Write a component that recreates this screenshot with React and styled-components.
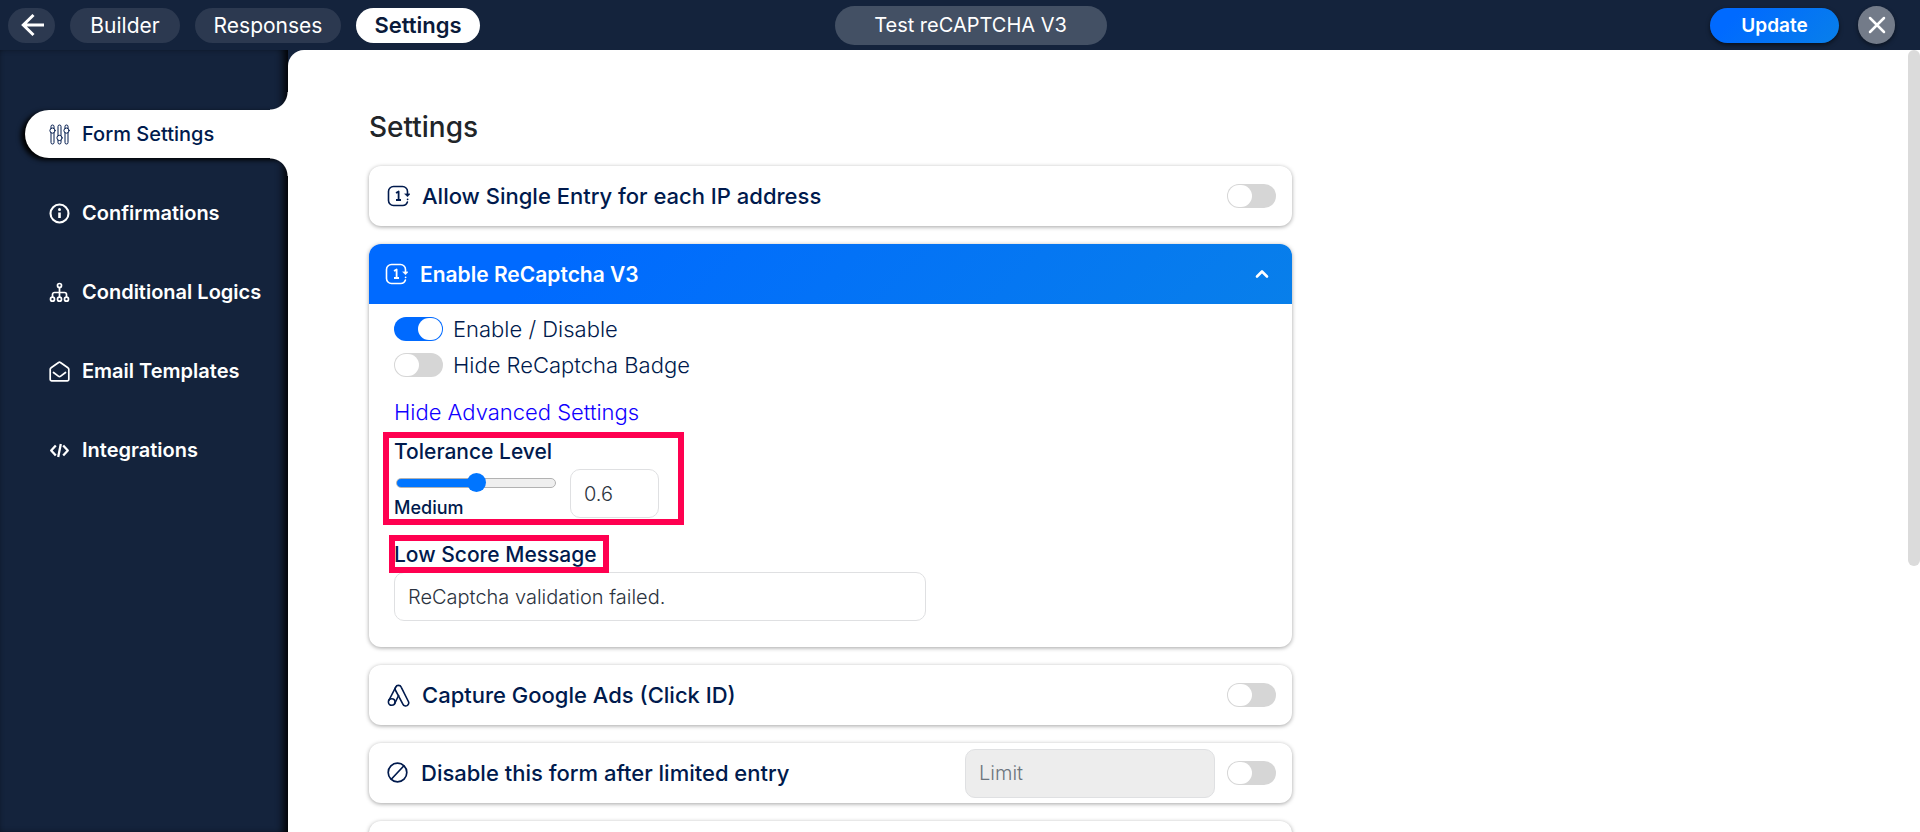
import React from "react";
import styled, { createGlobalStyle, css } from "styled-components";

const navy = "#14233c";
const ink = "#001a4d";
const pink = "#ff0050";
const blueGradient = "linear-gradient(135deg, #006aff 0%, #006aff 20%, #087fea 100%)";

const GlobalStyle = createGlobalStyle`
  *, *::before, *::after { box-sizing: border-box; }
  html, body { margin: 0; background: ${navy}; }
  body, button, input { font-family: Inter, "Open Sans", sans-serif; }
  h1, h2, p { margin: 0; }
`;

const Page = styled.div`
  display: flex;
  flex-direction: column;
  height: 100vh;
  background: ${navy};
`;

const TopBar = styled.header`
  display: grid;
  grid-template-columns: 1fr auto 1fr;
  align-items: center;
  height: 50px;
  padding: 0 25px 0 8px;
  flex: none;
`;

const Nav = styled.nav`
  display: flex;
  gap: 15px;
`;

const NavPill = styled.button`
  display: flex;
  align-items: center;
  justify-content: center;
  height: 35px;
  width: ${(p) => p.$width}px;
  padding: 0;
  border: 0;
  border-radius: 18px;
  background: ${(p) => (p.$active ? "#fff" : "#2c3950")};
  color: ${(p) => (p.$active ? "#0a1a3a" : "#fff")};
  font-size: ${(p) => (p.$active ? 22 : 21)}px;
  font-weight: ${(p) => (p.$active ? 600 : 400)};
`;

const FormName = styled.input`
  width: 272px;
  height: 39px;
  margin-left: 38px;
  padding: 0;
  border: 0;
  border-radius: 20px;
  background: #435064;
  color: #fff;
  font-size: 20px;
  text-align: center;
`;

const Actions = styled.div`
  display: flex;
  align-items: center;
  justify-content: flex-end;
  gap: 19px;
`;

const UpdateButton = styled.button`
  width: 129px;
  height: 35px;
  border: 0;
  border-radius: 18px;
  background: ${blueGradient};
  box-shadow: 0 2px 4px rgba(0, 0, 0, 0.55);
  color: #fff;
  font-size: 19px;
  font-weight: 600;
`;

const CloseButton = styled.button`
  display: flex;
  align-items: center;
  justify-content: center;
  width: 37px;
  height: 38px;
  padding: 0;
  border: 0;
  border-radius: 19px;
  background: #737b89;
  box-shadow: 0 2px 4px rgba(0, 0, 0, 0.45);
  color: #fff;
`;

const Body = styled.div`
  display: flex;
  flex: 1;
  min-height: 0;
`;

const Sidebar = styled.nav`
  display: flex;
  flex-direction: column;
  gap: 31px;
  width: 288px;
  flex: none;
  padding: 60px 0 0 25px;
  box-shadow: inset -8px 0 8px -4px #000, inset 4px 0 4px -3px rgba(0, 0, 0, 0.2);
`;

const activeItem = css`
  position: relative;
  background: #fff;
  color: ${ink};
  font-weight: 500;
  box-shadow: -4px 2px 5px #000;

  &::before,
  &::after {
    content: "";
    position: absolute;
    right: 0;
    width: 18px;
    height: 18px;
  }
  &::before {
    bottom: 100%;
    background: radial-gradient(circle at 0 0, transparent 17px, #fff 18px);
  }
  &::after {
    top: 100%;
    background: radial-gradient(circle at 0 100%, transparent 17px, #fff 18px);
  }
`;

const SideItem = styled.a`
  display: flex;
  align-items: center;
  gap: 12px;
  height: 48px;
  padding-left: 24px;
  border-radius: 24px 0 0 24px;
  color: #fff;
  font-size: 20px;
  font-weight: 600;
  text-decoration: none;
  white-space: nowrap;
  ${(p) => p.$active && activeItem}
`;

const Main = styled.main`
  position: relative;
  flex: 1;
  min-width: 0;
  overflow: hidden;
  padding: 61px 80px 0 81px;
  border-top-left-radius: 16px;
  background: #fff;
`;

const ScrollThumb = styled.div`
  position: absolute;
  top: 0;
  right: 0;
  width: 12px;
  height: 66%;
  border-radius: 6px;
  background: #dbdbdb;
`;

const Title = styled.h1`
  margin-bottom: 22px;
  color: #212529;
  font-size: 28px;
  font-weight: 500;
  line-height: 33px;
`;

const Cards = styled.div`
  display: flex;
  flex-direction: column;
  gap: 18px;
  max-width: 923px;
`;

const Card = styled.section`
  border-radius: 12px;
  background: #fff;
  box-shadow: 0 1px 4px rgba(0, 0, 0, 0.36);
  overflow: hidden;
`;

const CardHead = styled.div`
  display: flex;
  align-items: center;
  gap: 12px;
  height: 60px;
  padding: 0 16px 0 18px;
  color: ${ink};
`;

const OpenHead = styled.button`
  display: flex;
  align-items: center;
  gap: 12px;
  width: 100%;
  height: 60px;
  padding: 0 22px 0 16px;
  border: 0;
  background: ${blueGradient};
  color: #fff;
  font-size: 21px;
  font-weight: 600;
  text-align: left;
`;

const HeadLabel = styled.label`
  flex: 1;
  font-size: 22px;
  font-weight: 500;
`;

const HeadText = styled.span`
  flex: 1;
`;

const Toggle = styled.input.attrs({ type: "checkbox", role: "switch" })`
  appearance: none;
  flex: none;
  width: 49px;
  height: 24px;
  margin: 0;
  padding: 1px;
  border-radius: 12px;
  background: #d6d6d6;

  &::before {
    content: "";
    display: block;
    width: 24px;
    height: 22px;
    border-radius: 12px;
    background: #fff;
  }
  &:checked {
    background: #006aff;
  }
  &:checked::before {
    margin-left: 23px;
  }
`;

const CardBody = styled.div`
  display: flex;
  flex-direction: column;
  align-items: flex-start;
  padding: 13px 25px 26px;
`;

const ToggleRow = styled.label`
  display: flex;
  align-items: center;
  gap: 10px;
  height: 24px;
  margin-bottom: 12px;
  color: ${ink};
  font-size: 22px;
  font-weight: 300;
`;

const AdvancedLink = styled.a`
  margin: 11px 0 13px;
  color: #1100ff;
  font-size: 22px;
  font-weight: 300;
  line-height: 24px;
  text-decoration: none;
`;

const Marked = styled.div`
  position: relative;
  &::after {
    content: "";
    position: absolute;
    inset: ${(p) => p.$inset};
    border: 6px solid ${pink};
    pointer-events: none;
  }
`;

const FieldLabel = styled.label`
  display: block;
  margin-bottom: 2px;
  color: ${ink};
  font-size: 21px;
  font-weight: 500;
  line-height: 30px;
`;

const Tolerance = styled.div`
  display: flex;
  gap: 14px;
  margin-bottom: 22px;
`;

const SliderColumn = styled.div`
  display: flex;
  flex-direction: column;
  gap: 6px;
  padding-top: 4px;
`;

const Slider = styled.input.attrs({ type: "range" })`
  appearance: none;
  width: 160px;
  height: 19px;
  margin: 0 0 0 2px;
  background: transparent;

  &::-webkit-slider-runnable-track {
    height: 10px;
    border: 1px solid #b2b2b2;
    border-radius: 5px;
    background: linear-gradient(90deg, #0075ff 50%, #efefef 50%);
    background-origin: border-box;
  }
  &::-webkit-slider-thumb {
    appearance: none;
    width: 19px;
    height: 19px;
    margin-top: -6px;
    border-radius: 50%;
    background: #0075ff;
  }
`;

const LevelName = styled.output`
  color: ${ink};
  font-size: 18px;
  font-weight: 500;
  line-height: 20px;
`;

const TextBox = styled.input`
  width: ${(p) => p.$width}px;
  height: 49px;
  padding: 0 13px;
  border: 1px solid #dfe0e2;
  border-radius: 10px;
  background: #fff;
  color: #2b3340;
  font-size: 20px;
  font-weight: 300;

  &:disabled {
    background: #ededed;
  }
  &::placeholder {
    color: #6c757d;
    opacity: 1;
  }
`;

const svgProps = { fill: "none", stroke: "currentColor", strokeLinecap: "round", strokeLinejoin: "round", "aria-hidden": true };

const ArrowIcon = () => (
  <svg width="26" height="24" viewBox="0 0 26 24" {...svgProps} strokeWidth="3" strokeLinecap="butt" strokeLinejoin="miter">
    <path d="M25 12H4M14.500 2L4.300 12l10.200 10" />
  </svg>
);

const CloseIcon = () => (
  <svg width="18" height="18" viewBox="0 0 18 18" {...svgProps} strokeWidth="2.5">
    <path d="M2 2l14 14M16 2L2 16" />
  </svg>
);

const SlidersIcon = () => (
  <svg width="21" height="21" viewBox="0 0 21 21" {...svgProps} strokeWidth="1">
    <path d="M2 4.200V2.500a1.500 1.500 0 0 1 3 0v1.700M2 9v9.500a1.500 1.500 0 0 0 3 0V9" />
    <circle cx="3.500" cy="6.600" r="2.600" />
    <path d="M9 11.400V2.500a1.500 1.500 0 0 1 3 0v8.900M9 16.400v2.100a1.500 1.500 0 0 0 3 0v-2.100" />
    <circle cx="10.500" cy="13.900" r="2.600" />
    <path d="M16 4.200V2.500a1.500 1.500 0 0 1 3 0v1.700M16 9v9.500a1.500 1.500 0 0 0 3 0V9" />
    <circle cx="17.500" cy="6.600" r="2.600" />
  </svg>
);

const InfoIcon = () => (
  <svg width="21" height="21" viewBox="0 0 21 21" {...svgProps} strokeWidth="2.1">
    <circle cx="10.500" cy="10.500" r="9" />
    <path d="M10.500 9.500v5.500" strokeWidth="2.600" strokeLinecap="butt" />
    <circle cx="10.500" cy="6.600" r="1.500" fill="currentColor" stroke="none" />
  </svg>
);

const TreeIcon = () => (
  <svg width="21" height="21" viewBox="0 0 21 21" {...svgProps} strokeWidth="1.700">
    <circle cx="10.500" cy="3.500" r="2" />
    <circle cx="3.500" cy="17.200" r="2" />
    <circle cx="10.500" cy="17.200" r="2" />
    <circle cx="17.500" cy="17.200" r="2" />
    <path d="M10.500 5.500v9.500M3.500 15v-2.500a2 2 0 0 1 2-2h10a2 2 0 0 1 2 2V15" />
  </svg>
);

const MailIcon = () => (
  <svg width="21" height="21" viewBox="0 0 21 21" {...svgProps} strokeWidth="1.700">
    <path d="M1.200 8.300v10.200a1.300 1.300 0 0 0 1.300 1.300h16a1.300 1.300 0 0 0 1.300-1.300V8.300a2 2 0 0 0-.9-1.600L11.400 1.500a1.600 1.600 0 0 0-1.800 0L2.100 6.700a2 2 0 0 0-.9 1.600z" />
    <path d="M4.500 11.500l4.800 3.600a2 2 0 0 0 2.400 0l4.800-3.600" />
  </svg>
);

const CodeIcon = () => (
  <svg width="21" height="21" viewBox="0 0 21 21" {...svgProps} strokeWidth="2.300" strokeLinecap="butt">
    <path d="M6.800 5.500L2.200 10.500l4.600 5M14.200 5.500l4.600 5-4.600 5M11.800 4L9.200 17" />
  </svg>
);

const OnceIcon = () => (
  <svg width="23" height="23" viewBox="0 0 23 23" {...svgProps} strokeWidth="1.600">
    <path d="M20.500 9.500V6.500a5 5 0 0 0-5-5h-9a5 5 0 0 0-5 5v9a5 5 0 0 0 5 5h9a5 5 0 0 0 4.900-3.500" />
    <path d="M17.800 9l2.700 2.800L23 9z" fill="currentColor" strokeWidth="0.500" />
    <path d="M9 8l2.600-1.500v8.500M9 15h5" strokeWidth="1.800" strokeLinecap="butt" />
    <circle cx="20.600" cy="14.300" r="0.900" fill="currentColor" stroke="none" />
  </svg>
);

const AdsIcon = () => (
  <svg width="23" height="23" viewBox="0 0 23 23" {...svgProps} strokeWidth="1.600">
    <path d="M8.600 3.300a3.100 3.100 0 0 1 5.700 0l7.100 14.200a3 3 0 0 1-5.400 2.800L8.600 6.500a3.400 3.400 0 0 1 0-3.200z" />
    <path d="M8.600 3.300L1.800 16.500M11.600 11.500L7.500 19.800" />
    <circle cx="4.700" cy="18" r="3.300" />
  </svg>
);

const BlockIcon = () => (
  <svg width="22" height="22" viewBox="0 0 22 22" {...svgProps} strokeWidth="1.700">
    <circle cx="10.500" cy="10.500" r="9.300" />
    <path d="M4.500 17L16.700 4" />
  </svg>
);

const ChevronUpIcon = () => (
  <svg width="16" height="16" viewBox="0 0 16 16" {...svgProps} strokeWidth="2.600">
    <path d="M3 10.500l5-5 5 5" />
  </svg>
);

const sideItems = [
  { label: "Form Settings", Icon: SlidersIcon, active: true },
  { label: "Confirmations", Icon: InfoIcon },
  { label: "Conditional Logics", Icon: TreeIcon },
  { label: "Email Templates", Icon: MailIcon },
  { label: "Integrations", Icon: CodeIcon },
];

export default function App() {
  return (
    <>
      <GlobalStyle />
      <Page>
        <TopBar>
          <Nav aria-label="Form">
            <NavPill $width={47} aria-label="Back"><ArrowIcon /></NavPill>
            <NavPill $width={110}>Builder</NavPill>
            <NavPill $width={146}>Responses</NavPill>
            <NavPill $width={124} $active>Settings</NavPill>
          </Nav>
          <FormName aria-label="Form name" defaultValue="Test reCAPTCHA V3" />
          <Actions>
            <UpdateButton>Update</UpdateButton>
            <CloseButton aria-label="Close"><CloseIcon /></CloseButton>
          </Actions>
        </TopBar>
        <Body>
          <Sidebar aria-label="Settings sections">
            {sideItems.map(({ label, Icon, active }) => (
              <SideItem key={label} href="#" $active={active}>
                <Icon />
                {label}
              </SideItem>
            ))}
          </Sidebar>
          <Main>
            <Title>Settings</Title>
            <Cards>
              <Card>
                <CardHead>
                  <OnceIcon />
                  <HeadLabel htmlFor="single-entry">Allow Single Entry for each IP address</HeadLabel>
                  <Toggle id="single-entry" />
                </CardHead>
              </Card>
              <Card>
                <OpenHead aria-expanded="true">
                  <OnceIcon />
                  <HeadText>Enable ReCaptcha V3</HeadText>
                  <ChevronUpIcon />
                </OpenHead>
                <CardBody>
                  <ToggleRow><Toggle defaultChecked />Enable / Disable</ToggleRow>
                  <ToggleRow><Toggle />Hide ReCaptcha Badge</ToggleRow>
                  <AdvancedLink href="#">Hide Advanced Settings</AdvancedLink>
                  <Marked $inset="-5px -25px 15px -11px">
                    <FieldLabel htmlFor="tolerance">Tolerance Level</FieldLabel>
                    <Tolerance>
                      <SliderColumn>
                        <Slider id="tolerance" min="0" max="100" defaultValue="50" />
                        <LevelName htmlFor="tolerance">Medium</LevelName>
                      </SliderColumn>
                      <TextBox $width={89} aria-label="Tolerance value" defaultValue="0.6" />
                    </Tolerance>
                  </Marked>
                  <Marked $inset="-5px -12px -1px -5px">
                    <FieldLabel htmlFor="low-score">Low Score Message</FieldLabel>
                  </Marked>
                  <TextBox id="low-score" $width={532} defaultValue="ReCaptcha validation failed." />
                </CardBody>
              </Card>
              <Card>
                <CardHead>
                  <AdsIcon />
                  <HeadLabel htmlFor="google-ads">Capture Google Ads (Click ID)</HeadLabel>
                  <Toggle id="google-ads" />
                </CardHead>
              </Card>
              <Card>
                <CardHead>
                  <BlockIcon />
                  <HeadLabel htmlFor="limit-entry">Disable this form after limited entry</HeadLabel>
                  <TextBox $width={250} aria-label="Entry limit" placeholder="Limit" disabled />
                  <Toggle id="limit-entry" />
                </CardHead>
              </Card>
              <Card>
                <CardHead />
              </Card>
            </Cards>
            <ScrollThumb />
          </Main>
        </Body>
      </Page>
    </>
  );
}
